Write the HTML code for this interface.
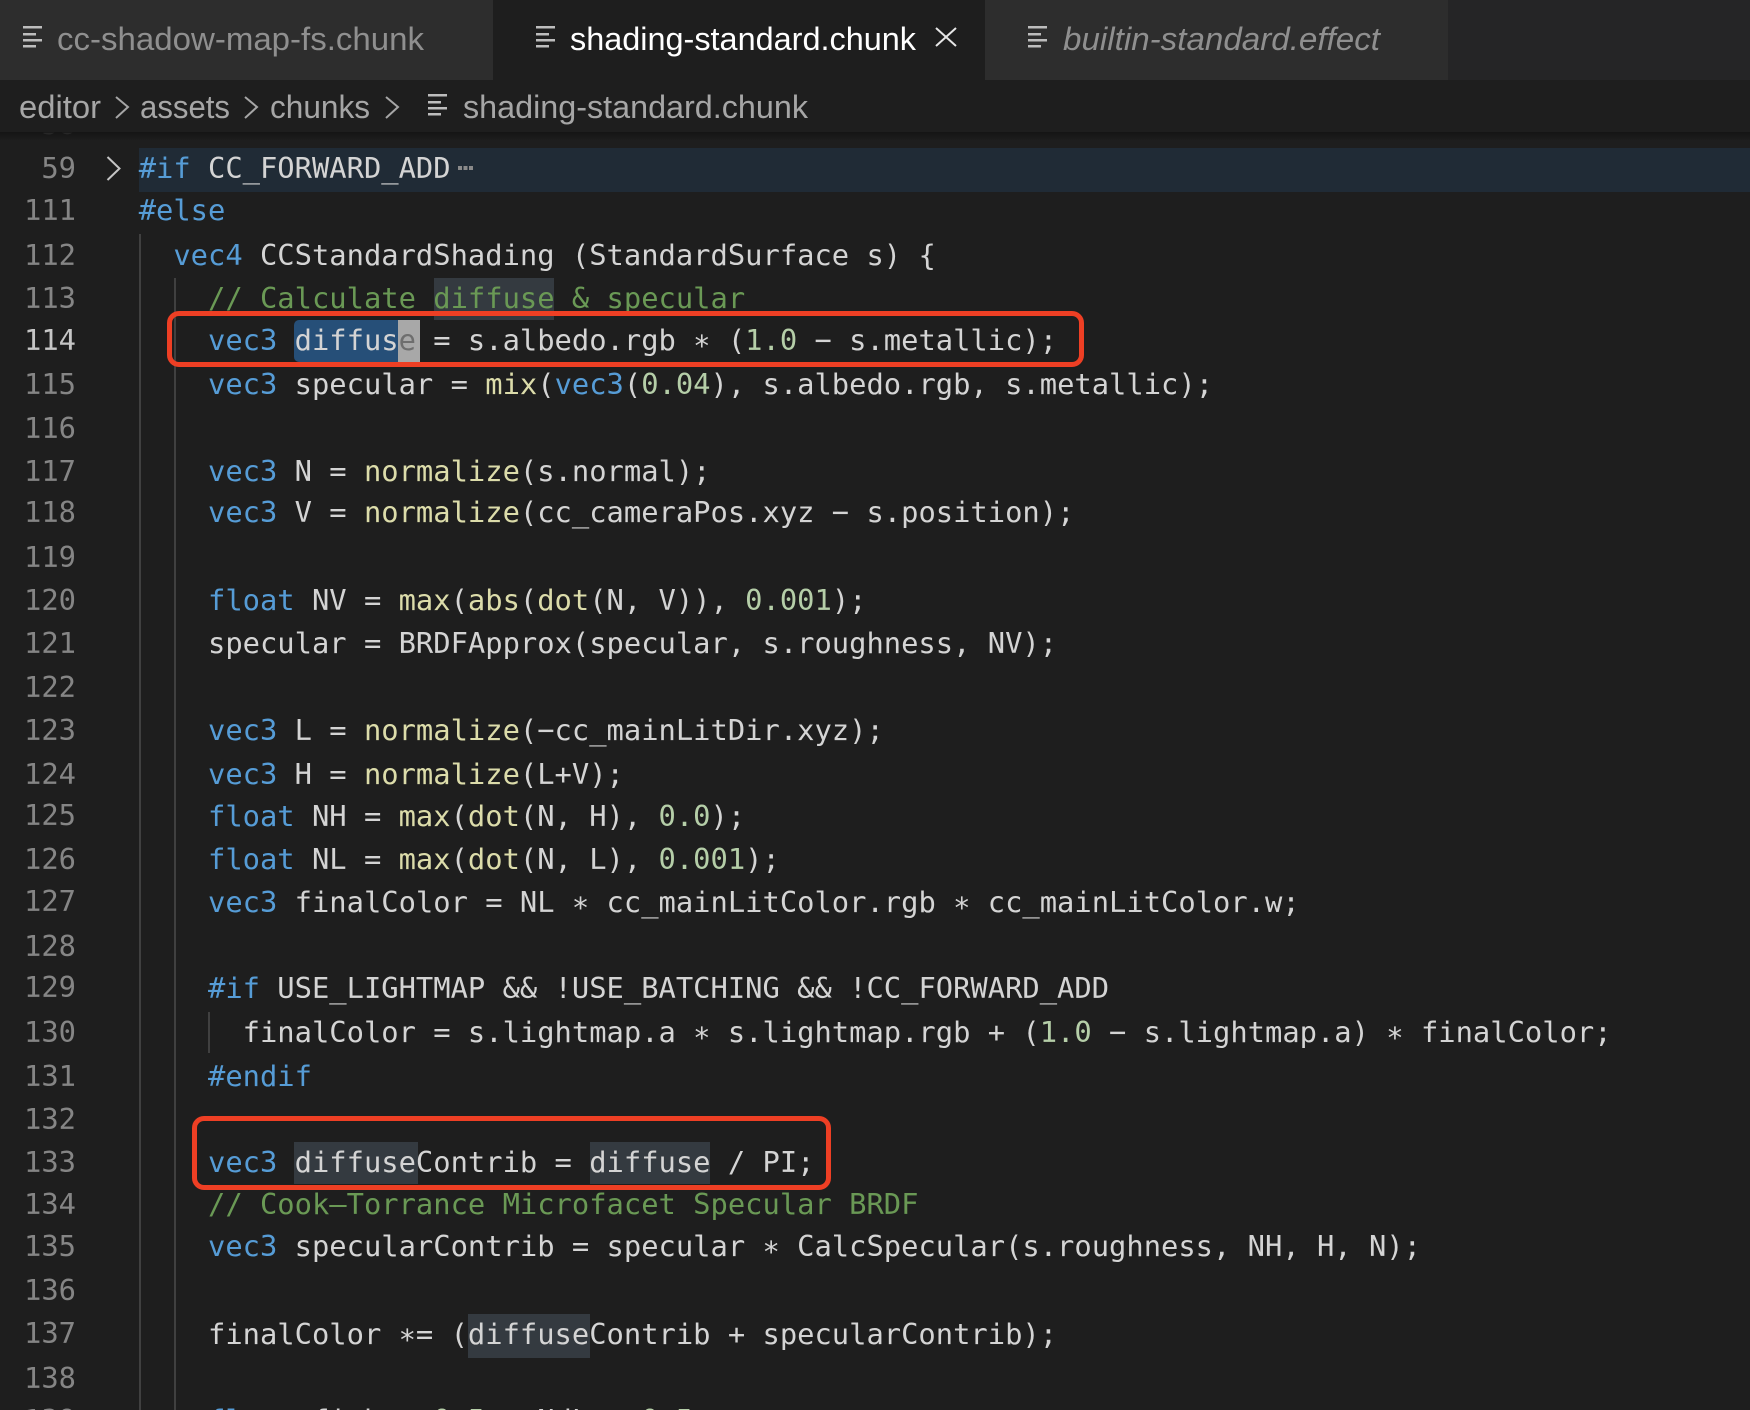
<!DOCTYPE html>
<html><head><meta charset="utf-8">
<style>
html,body{margin:0;padding:0;background:#1e1e1e}
#p{position:relative;width:1750px;height:1410px;overflow:hidden;background:#1e1e1e;font-family:"DejaVu Sans Mono","Liberation Mono",monospace;font-size:28.79px;color:#d4d4d4}
.l{position:absolute;left:138.7px;height:43px;line-height:43px;white-space:pre}
.g{position:absolute;left:0;width:76px;height:43px;line-height:43px;text-align:right;color:#858585}
.r{position:absolute}
.w{position:absolute;background:#343a40;height:43px}
.k{color:#569cd6}.f{color:#dcdcaa}.n{color:#b5cea8}.c{color:#6a9955}
.box{position:absolute;border:5px solid #ee3f24;border-radius:12px;box-sizing:border-box}
svg{position:absolute;left:0;top:0}
text{font-family:"Liberation Sans",sans-serif;font-size:32px}
</style></head><body><div id="p">

<!-- row backgrounds -->
<div class="r" style="left:139px;top:148px;width:1611px;height:44px;background:#202b36"></div>
<div class="w" style="left:434px;top:278px;width:120px;height:42px"></div>
<div class="r" style="left:294px;top:320px;width:104px;height:42px;background:#264f78;border-radius:5px 0 0 5px"></div>
<div class="r" style="left:398px;top:320px;width:22px;height:42px;background:#a8a8a8"></div>
<div class="w" style="left:294px;top:1142px;width:124px;height:42px"></div>
<div class="w" style="left:590px;top:1142px;width:120px;height:42px"></div>
<div class="w" style="left:468px;top:1314px;width:122px;height:44px"></div>

<!-- indent guides -->
<div class="r" style="left:138.5px;top:234px;width:2px;height:1176px;background:#404040"></div>
<div class="r" style="left:174px;top:278px;width:2px;height:1132px;background:#404040"></div>
<div class="r" style="left:208px;top:1012px;width:2px;height:41px;background:#404040"></div>

<!-- gutter -->
<div class="g" style="top:102.8px">58</div>
<div class="g" style="top:147px">59</div>
<div class="g" style="top:189.2px">111</div>
<div class="g" style="top:233.5px">112</div>
<div class="g" style="top:276.7px">113</div>
<div class="g" style="top:318.8px;color:#c6c6c6">114</div>
<div class="g" style="top:362.5px">115</div>
<div class="g" style="top:407.4px">116</div>
<div class="g" style="top:449.5px">117</div>
<div class="g" style="top:490.5px">118</div>
<div class="g" style="top:535.9px">119</div>
<div class="g" style="top:579.1px">120</div>
<div class="g" style="top:622.3px">121</div>
<div class="g" style="top:665.5px">122</div>
<div class="g" style="top:708.7px">123</div>
<div class="g" style="top:753px">124</div>
<div class="g" style="top:794px">125</div>
<div class="g" style="top:838.3px">126</div>
<div class="g" style="top:880.4px">127</div>
<div class="g" style="top:924.7px">128</div>
<div class="g" style="top:965.7px">129</div>
<div class="g" style="top:1011.1px">130</div>
<div class="g" style="top:1055.4px">131</div>
<div class="g" style="top:1097.5px">132</div>
<div class="g" style="top:1140.7px">133</div>
<div class="g" style="top:1182.8px">134</div>
<div class="g" style="top:1224.9px">135</div>
<div class="g" style="top:1269.2px">136</div>
<div class="g" style="top:1312.4px">137</div>
<div class="g" style="top:1356.7px">138</div>
<div class="g" style="top:1398.8px">139</div>

<!-- code -->
<div class="l" style="top:147px"><span class="k">#if</span> CC_FORWARD_ADD</div>
<div class="l" style="top:189.2px"><span class="k">#else</span></div>
<div class="l" style="top:233.5px">  <span class="k">vec4</span> CCStandardShading (StandardSurface s) {</div>
<div class="l" style="top:276.7px">    <span class="c">// Calculate diffuse &amp; specular</span></div>
<div class="l" style="top:318.8px">    <span class="k">vec3</span> diffus<span style="color:#6e6e6e">e</span> = s.albedo.rgb ∗ (<span class="n">1.0</span> − s.metallic);</div>
<div class="l" style="top:362.5px">    <span class="k">vec3</span> specular = <span class="f">mix</span>(<span class="k">vec3</span>(<span class="n">0.04</span>), s.albedo.rgb, s.metallic);</div>
<div class="l" style="top:449.5px">    <span class="k">vec3</span> N = <span class="f">normalize</span>(s.normal);</div>
<div class="l" style="top:490.5px">    <span class="k">vec3</span> V = <span class="f">normalize</span>(cc_cameraPos.xyz − s.position);</div>
<div class="l" style="top:579.1px">    <span class="k">float</span> NV = <span class="f">max</span>(<span class="f">abs</span>(<span class="f">dot</span>(N, V)), <span class="n">0.001</span>);</div>
<div class="l" style="top:622.3px">    specular = BRDFApprox(specular, s.roughness, NV);</div>
<div class="l" style="top:708.7px">    <span class="k">vec3</span> L = <span class="f">normalize</span>(−cc_mainLitDir.xyz);</div>
<div class="l" style="top:753px">    <span class="k">vec3</span> H = <span class="f">normalize</span>(L+V);</div>
<div class="l" style="top:795px">    <span class="k">float</span> NH = <span class="f">max</span>(<span class="f">dot</span>(N, H), <span class="n">0.0</span>);</div>
<div class="l" style="top:838.3px">    <span class="k">float</span> NL = <span class="f">max</span>(<span class="f">dot</span>(N, L), <span class="n">0.001</span>);</div>
<div class="l" style="top:881.4px">    <span class="k">vec3</span> finalColor = NL ∗ cc_mainLitColor.rgb ∗ cc_mainLitColor.w;</div>
<div class="l" style="top:966.8px">    <span class="k">#if</span> USE_LIGHTMAP &amp;&amp; !USE_BATCHING &amp;&amp; !CC_FORWARD_ADD</div>
<div class="l" style="top:1011.1px">      finalColor = s.lightmap.a ∗ s.lightmap.rgb + (<span class="n">1.0</span> − s.lightmap.a) ∗ finalColor;</div>
<div class="l" style="top:1055.4px">    <span class="k">#endif</span></div>
<div class="l" style="top:1140.7px">    <span class="k">vec3</span> diffuseContrib = diffuse / PI;</div>
<div class="l" style="top:1182.8px">    <span class="c">// Cook–Torrance Microfacet Specular BRDF</span></div>
<div class="l" style="top:1224.9px">    <span class="k">vec3</span> specularContrib = specular ∗ CalcSpecular(s.roughness, NH, H, N);</div>
<div class="l" style="top:1313.4px">    finalColor ∗= (diffuseContrib + specularContrib);</div>
<div class="l" style="top:1398.8px">    <span class="k">float</span> fish = <span class="n">0.5</span> + NdL + <span class="n">0.5</span>;</div>

<!-- red boxes -->
<div class="box" style="left:167px;top:311px;width:917px;height:56px"></div>
<div class="box" style="left:192px;top:1116px;width:639px;height:74px"></div>

<!-- top chrome -->
<div class="r" style="left:0;top:132px;width:1750px;height:9px;background:linear-gradient(#141414,#1e1e1e00)"></div>
<div class="r" style="left:0;top:0;width:1750px;height:132px;background:#1e1e1e"></div>
<div class="r" style="left:0;top:0;width:1750px;height:80px;background:#252526"></div>
<div class="r" style="left:0;top:0;width:493px;height:80px;background:#2d2d2d"></div>
<div class="r" style="left:493px;top:0;width:492px;height:80px;background:#1e1e1e"></div>
<div class="r" style="left:985px;top:0;width:463px;height:80px;background:#2d2d2d"></div>

<svg width="1750" height="1410" viewBox="0 0 1750 1410">
  <!-- file icons -->
  <g fill="#bdbdbd">
    <rect x="23" y="26" width="19" height="2.5"/><rect x="23" y="33" width="13" height="2.5"/><rect x="23" y="39" width="19" height="2.5"/><rect x="23" y="45" width="13" height="2.5"/>
    <rect x="536" y="26" width="19" height="2.5"/><rect x="536" y="33" width="13" height="2.5"/><rect x="536" y="39" width="19" height="2.5"/><rect x="536" y="45" width="13" height="2.5"/>
    <rect x="1028" y="26" width="19" height="2.5"/><rect x="1028" y="33" width="13" height="2.5"/><rect x="1028" y="39" width="19" height="2.5"/><rect x="1028" y="45" width="13" height="2.5"/>
    <rect x="428" y="94" width="19" height="2.5"/><rect x="428" y="101" width="13" height="2.5"/><rect x="428" y="107" width="19" height="2.5"/><rect x="428" y="113" width="13" height="2.5"/>
  </g>
  <!-- tab labels -->
  <text x="57" y="50" fill="#8f8f8f" textLength="367" lengthAdjust="spacingAndGlyphs">cc-shadow-map-fs.chunk</text>
  <text x="570" y="50" fill="#ffffff" textLength="346" lengthAdjust="spacingAndGlyphs">shading-standard.chunk</text>
  <text x="1063" y="50" fill="#8f8f8f" font-style="italic" textLength="317" lengthAdjust="spacingAndGlyphs">builtin-standard.effect</text>
  <path d="M936 28 L956 46 M956 28 L936 46" stroke="#e6e6e6" stroke-width="2" fill="none"/>
  <!-- breadcrumbs -->
  <g fill="#a6a6a6">
    <text x="19" y="118" textLength="82" lengthAdjust="spacingAndGlyphs">editor</text>
    <text x="140" y="118" textLength="90" lengthAdjust="spacingAndGlyphs">assets</text>
    <text x="270" y="118" textLength="100" lengthAdjust="spacingAndGlyphs">chunks</text>
    <text x="463" y="118" textLength="345" lengthAdjust="spacingAndGlyphs">shading-standard.chunk</text>
  </g>
  <g stroke="#a6a6a6" stroke-width="2" fill="none">
    <path d="M116 97 L128 107 L116 118"/>
    <path d="M245 97 L257 107 L245 118"/>
    <path d="M386 97 L398 107 L386 118"/>
  </g>
  <!-- fold chevron -->
  <path d="M107.5 157 L119.5 168.5 L107.5 180" stroke="#c5c5c5" stroke-width="2" fill="none"/>
  <!-- folded ellipsis -->
  <g fill="#8a8a8a"><rect x="458" y="166" width="4" height="4"/><rect x="463.5" y="166" width="4" height="4"/><rect x="469" y="166" width="4" height="4"/></g>
</svg>
</div></body></html>
